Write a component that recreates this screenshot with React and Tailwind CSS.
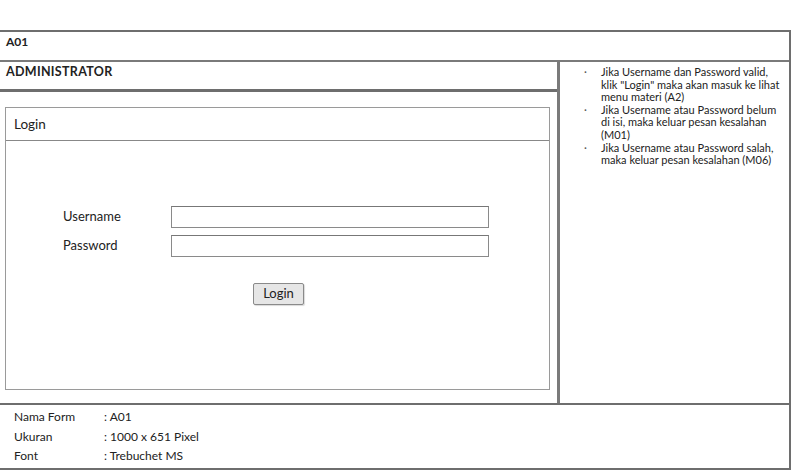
export default function App() {
  const notes = [
    ["Jika Username dan Password valid,", 'klik "Login" maka akan masuk ke lihat', "menu materi (A2)"],
    ["Jika Username atau Password belum", "di isi, maka keluar pesan kesalahan", "(M01)"],
    ["Jika Username atau Password salah,", "maka keluar pesan kesalahan (M06)"],
  ];
  return (
    <div className="w-[797px] h-[470px] bg-white overflow-hidden font-['Lato',sans-serif] text-[#222]">
      <div className="h-[30px]" />
      <div className="w-[791px] border-t-2 border-r-2 border-[#6e6e6e]">
        <div className="h-[30px] border-b-2 border-[#7a7a7a] pl-[6px] pt-[2px] text-[12px] font-bold leading-[16px]">A01</div>
        <div className="flex h-[341px]">
          <div className="w-[557px] flex flex-col">
            <div className="h-[30px] border-b-[3px] border-[#6e6e6e] pl-[6px] pt-[2px] text-[12.5px] tracking-[0.3px] font-bold leading-[16px]">ADMINISTRATOR</div>
            <div className="flex-1 pl-[5px] pr-[7px] pt-[15px] pb-[13px] flex">
              <div className="flex-1 border border-[#9a9a9a] flex flex-col">
                <div className="h-[33px] border-b border-[#888] pl-[8px] flex items-center text-[13.5px]">Login</div>
                <div className="flex-1 flex flex-col pl-[57px] pt-[65px]">
                  <div className="flex items-center h-[22px]">
                    <div className="w-[108px] text-[13px]">Username</div>
                    <div className="w-[318px] h-[22px] border border-[#8a8a8a] border-t-[#777] bg-white" />
                  </div>
                  <div className="flex items-center h-[22px] mt-[7px]">
                    <div className="w-[108px] text-[13px]">Password</div>
                    <div className="w-[318px] h-[22px] border border-[#8a8a8a] border-t-[#777] bg-white" />
                  </div>
                  <div className="mt-[26px] ml-[190px] w-[51px] h-[22px] bg-[#e6e6e6] border border-[#8a8a8a] rounded-[2px] shadow-[1px_1px_1px_rgba(0,0,0,0.15)] flex items-center justify-center text-[13px]">Login</div>
                </div>
              </div>
            </div>
          </div>
          <div className="flex-1 border-l-[3px] border-[#7a7a7a] pt-[4px] pl-[24px] pr-[4px]">
            {notes.map((lines, i) => (
              <div key={i} className="flex">
                <div className="w-[17px] text-[11px] leading-[12.6px] text-[#555]">·</div>
                <div className="text-[11px] leading-[12.6px]">
                  {lines.map((l, j) => (
                    <div key={j} className="whitespace-nowrap">{l}</div>
                  ))}
                </div>
              </div>
            ))}
          </div>
        </div>
        <div className="h-[67px] border-t-2 border-b-2 border-[#6e6e6e] pl-[14px] pt-[2px] text-[12px] leading-[19.5px]">
          {[["Nama Form", ": A01"], ["Ukuran", ": 1000 x 651 Pixel"], ["Font", ": Trebuchet MS"]].map(([a, b]) => (
            <div key={a} className="flex">
              <div className="w-[90px]">{a}</div>
              <div>{b}</div>
            </div>
          ))}
        </div>
      </div>
    </div>
  );
}
